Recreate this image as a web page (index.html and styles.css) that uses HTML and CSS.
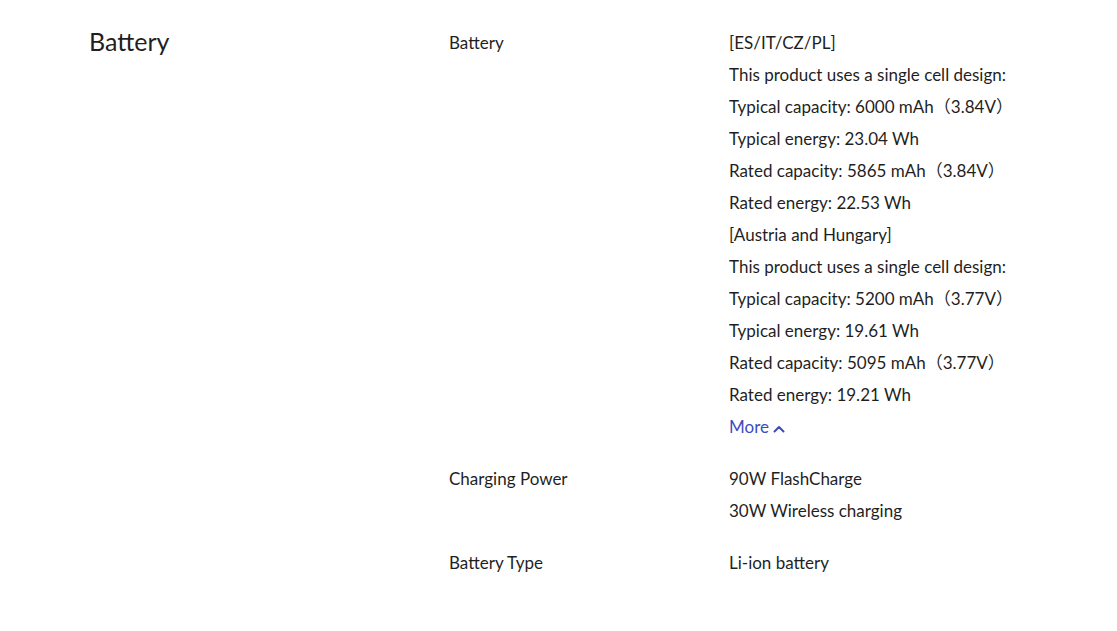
FILE: index.html
```html
<!DOCTYPE html>
<html lang="en">
<head>
<meta charset="utf-8">
<link rel="stylesheet" href="styles.css">
</head>
<body>
<section class="spec">
  <h2 class="spec-title">Battery</h2>
  <div class="spec-rows">
    <div class="spec-row">
      <div class="spec-label">Battery</div>
      <div class="spec-values">
        <p>[ES/IT/CZ/PL]</p>
        <p>This product uses a single cell design:</p>
        <p>Typical capacity: 6000 mAh（3.84V）</p>
        <p>Typical energy: 23.04 Wh</p>
        <p>Rated capacity: 5865 mAh（3.84V）</p>
        <p>Rated energy: 22.53 Wh</p>
        <p>[Austria and Hungary]</p>
        <p>This product uses a single cell design:</p>
        <p>Typical capacity: 5200 mAh（3.77V）</p>
        <p>Typical energy: 19.61 Wh</p>
        <p>Rated capacity: 5095 mAh（3.77V）</p>
        <p>Rated energy: 19.21 Wh</p>
        <p class="more">More<svg class="chev" width="12" height="8" viewBox="0 0 12 8"><path d="M1.5 6.5 L6 2 L10.5 6.5" fill="none" stroke="currentColor" stroke-width="2" stroke-linecap="round" stroke-linejoin="round"/></svg></p>
      </div>
    </div>
    <div class="spec-row">
      <div class="spec-label">Charging Power</div>
      <div class="spec-values">
        <p>90W FlashCharge</p>
        <p>30W Wireless charging</p>
      </div>
    </div>
    <div class="spec-row">
      <div class="spec-label">Battery Type</div>
      <div class="spec-values">
        <p>Li-ion battery</p>
      </div>
    </div>
  </div>
</section>
</body>
</html>
```

FILE: styles.css
```css
html, body {
  margin: 0;
  padding: 0;
  background: #ffffff;
}
body {
  font-family: "Lato", "Noto Sans CJK SC", sans-serif;
  color: #1f1f1f;
}
.spec {
  display: grid;
  grid-template-columns: 360px 1fr;
  padding: 27px 0 0 89px;
}
.spec-title {
  margin: 0;
  font-size: 25px;
  font-weight: 400;
  line-height: 29px;
}
.spec-rows {
  display: flex;
  flex-direction: column;
  gap: 20px;
}
.spec-row {
  display: grid;
  grid-template-columns: 280px 1fr;
}
.spec-label {
  font-size: 17px;
  line-height: 32px;
}
.spec-values p {
  margin: 0;
  font-size: 17px;
  line-height: 32px;
}
.more {
  color: #3e4bbd;
  display: flex;
  align-items: center;
  gap: 4px;
}
.chev {
  margin-top: 3px;
}
```
